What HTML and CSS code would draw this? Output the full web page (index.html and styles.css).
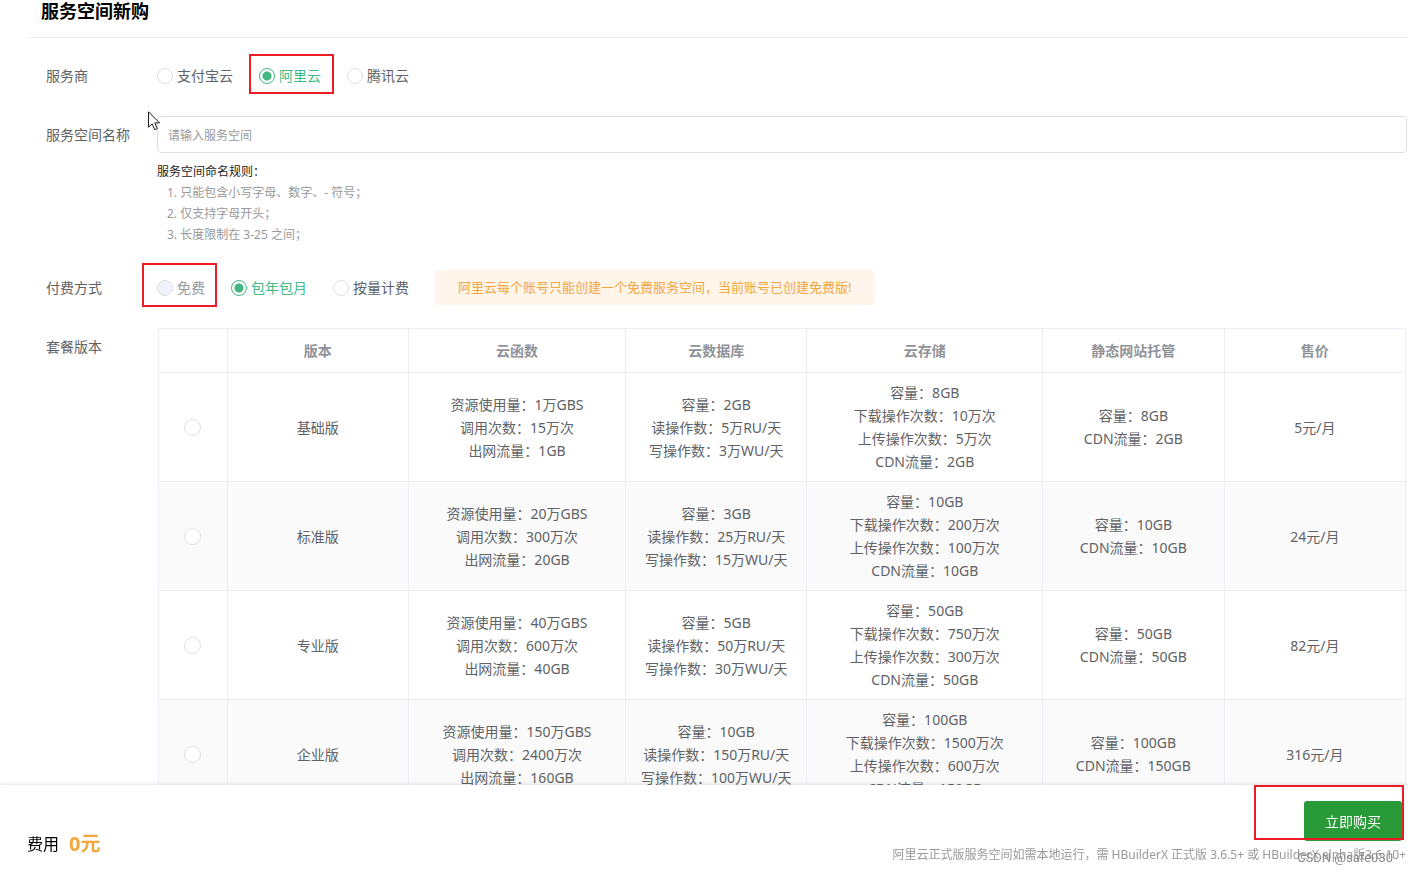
FILE: index.html
```
<!DOCTYPE html>
<html lang="zh-CN">

<head>
  <meta charset="UTF-8">
  <meta name="viewport" content="width=device-width, initial-scale=1.0">
  <title>服务空间新购</title>
  <link rel="stylesheet" href="styles.css">
</head>

<body>
  <header class="title">
    <h1>服务空间新购</h1>
  </header>
  <form class="form" id="buy">
    <div class="row">
      <span class="name" id="n_provider">服务商</span>
      <div class="radios" role="radiogroup" aria-labelledby="n_provider">
        <label class="radio"><input type="radio" name="provider">支付宝云</label>
        <label class="radio"><input type="radio" name="provider" checked>阿里云<i class="mark mark-provider"></i></label>
        <label class="radio"><input type="radio" name="provider">腾讯云</label>
      </div>
    </div>
    <div class="row">
      <label class="name" for="space">服务空间名称</label>
      <div class="field">
        <input class="text" id="space" type="text" placeholder="请输入服务空间">
        <svg class="cursor" width="13" height="20" viewBox="0 0 13 20">
          <path d="M.5 .8V16.2L4.2 12.9L6.8 18.7L9.3 17.6L6.8 11.9H11.6Z" fill="#fff" stroke="#1c1c28" />
        </svg>
        <div class="help">
          <p>服务空间命名规则：</p>
          <ol>
            <li>1. 只能包含小写字母、数字、- 符号；</li>
            <li>2. 仅支持字母开头；</li>
            <li>3. 长度限制在 3-25 之间；</li>
          </ol>
        </div>
      </div>
    </div>
    <div class="row">
      <span class="name" id="n_pay">付费方式</span>
      <div class="radios" role="radiogroup" aria-labelledby="n_pay">
        <label class="radio disabled"><input type="radio" name="pay" disabled>免费<i class="mark mark-free"></i></label>
        <label class="radio"><input type="radio" name="pay" checked>包年包月</label>
        <label class="radio"><input type="radio" name="pay">按量计费</label>
        <p class="alert">阿里云每个账号只能创建一个免费服务空间，当前账号已创建免费版!</p>
      </div>
    </div>
    <div class="row">
      <span class="name">套餐版本</span>
      <table class="plans">
        <colgroup>
          <col class="c-pick">
          <col class="c-mid">
          <col class="c-func">
          <col class="c-mid">
          <col class="c-store">
          <col class="c-mid">
          <col class="c-mid">
        </colgroup>
        <thead>
          <tr>
            <th></th>
            <th>版本</th>
            <th>云函数</th>
            <th>云数据库</th>
            <th>云存储</th>
            <th>静态网站托管</th>
            <th>售价</th>
          </tr>
        </thead>
        <tbody>
          <tr>
            <td><input type="radio" name="plan" aria-label="基础版"></td>
            <td>基础版</td>
            <td>资源使用量：1万GBS<br>调用次数：15万次<br>出网流量：1GB</td>
            <td>容量：2GB<br>读操作数：5万RU/天<br>写操作数：3万WU/天</td>
            <td>容量：8GB<br>下载操作次数：10万次<br>上传操作次数：5万次<br>CDN流量：2GB</td>
            <td>容量：8GB<br>CDN流量：2GB</td>
            <td>5元/月</td>
          </tr>
          <tr>
            <td><input type="radio" name="plan" aria-label="标准版"></td>
            <td>标准版</td>
            <td>资源使用量：20万GBS<br>调用次数：300万次<br>出网流量：20GB</td>
            <td>容量：3GB<br>读操作数：25万RU/天<br>写操作数：15万WU/天</td>
            <td>容量：10GB<br>下载操作次数：200万次<br>上传操作次数：100万次<br>CDN流量：10GB</td>
            <td>容量：10GB<br>CDN流量：10GB</td>
            <td>24元/月</td>
          </tr>
          <tr>
            <td><input type="radio" name="plan" aria-label="专业版"></td>
            <td>专业版</td>
            <td>资源使用量：40万GBS<br>调用次数：600万次<br>出网流量：40GB</td>
            <td>容量：5GB<br>读操作数：50万RU/天<br>写操作数：30万WU/天</td>
            <td>容量：50GB<br>下载操作次数：750万次<br>上传操作次数：300万次<br>CDN流量：50GB</td>
            <td>容量：50GB<br>CDN流量：50GB</td>
            <td>82元/月</td>
          </tr>
          <tr>
            <td><input type="radio" name="plan" aria-label="企业版"></td>
            <td>企业版</td>
            <td>资源使用量：150万GBS<br>调用次数：2400万次<br>出网流量：160GB</td>
            <td>容量：10GB<br>读操作数：150万RU/天<br>写操作数：100万WU/天</td>
            <td>容量：100GB<br>下载操作次数：1500万次<br>上传操作次数：600万次<br>CDN流量：150GB</td>
            <td>容量：100GB<br>CDN流量：150GB</td>
            <td>316元/月</td>
          </tr>
        </tbody>
      </table>
    </div>
  </form>
  <footer class="bar">
    <div class="fee">费用<strong>0元</strong></div>
    <div class="action">
      <button class="buy" type="submit" form="buy">立即购买</button>
      <p class="note">阿里云正式版服务空间如需本地运行，需 HBuilderX 正式版 3.6.5+ 或 HBuilderX alpha版3.6.10+</p>
    </div>
    <i class="mark mark-buy"></i>
    <span class="watermark">CSDN @safe030</span>
  </footer>
</body>

</html>
```
FILE: styles.css
```
* {
  padding: 0;
  margin: 0;
  box-sizing: border-box;
}

body {
  height: 100vh;
  overflow: hidden;
  background: #fff;
  color: #606266;
  font-family: "Noto Sans", "Noto Sans CJK SC", sans-serif;
  font-size: 14px;
  line-height: 23px;
}

.title {
  margin-left: 27px;
  padding: 0 14px 15px;
  border-bottom: 1px solid #ebeef0;
}

.title h1 {
  color: #000;
  font-size: 18px;
  line-height: 22px;
}

.form {
  display: flex;
  flex-direction: column;
  gap: 22px;
  padding: 19px 1px 0 46px;
}

.row {
  display: grid;
  grid-template-columns: 111px minmax(0, 1fr);
}

.name {
  line-height: 37px;
}

.radios {
  display: flex;
  align-items: center;
  gap: 26px;
}

.radio {
  position: relative;
  display: flex;
  align-items: center;
  gap: 4px;
  line-height: 21px;
}

.radio:has(:checked) {
  color: #42b983;
}

.disabled {
  color: #999;
}

input[type="radio"] {
  appearance: none;
  width: 16px;
  height: 16px;
  border: 1px solid #dcdfe6;
  border-radius: 50%;
  background: #fff;
}

input[type="radio"]:checked {
  border-color: #42b983;
  background: radial-gradient(circle, #42b983 4px, #fff 5px);
}

input[type="radio"]:disabled {
  background: #f0f3fa;
}

.field {
  position: relative;
}

.text {
  display: block;
  width: 100%;
  height: 37px;
  padding: 2px 10px 0;
  border: 1px solid #e0e0e0;
  border-radius: 4px;
  outline: none;
  font-family: inherit;
  font-size: 12px;
}

.text::placeholder {
  color: #999;
}

.cursor {
  position: absolute;
  left: -9px;
  top: -5px;
}

.help {
  padding: 8px 0 2px;
  color: #999;
  font-size: 12px;
  line-height: 21px;
}

.help p {
  color: #222;
}

.help ol {
  padding-left: 10px;
  list-style: none;
}

.alert {
  padding: 0 23px;
  border-radius: 4px;
  background: #fff5eb;
  color: #f3a73f;
  font-size: 13px;
  line-height: 35px;
}

.plans {
  width: calc(100% - 2px);
  margin: 0 1px;
  table-layout: fixed;
  border-collapse: collapse;
  text-align: center;
}

.c-pick {
  width: 67px;
}

.c-func {
  width: 17.4%;
}

.c-store {
  width: 18.9%;
}

.c-mid {
  width: 14.55%;
}

.plans th,
.plans td {
  padding: 8px 0;
  border: 1px solid #ebeef5;
}

.plans th {
  padding: 10px 0;
  color: #909399;
}

.plans td input {
  display: block;
  width: 17px;
  height: 17px;
  margin: 0 auto;
}

.plans tbody tr:nth-child(even) {
  background: #fafafa;
}

.bar {
  position: fixed;
  left: 0;
  right: 0;
  bottom: 0;
  height: 88px;
  display: flex;
  justify-content: space-between;
  padding: 16px 2px 0 27px;
  background: #fff;
  box-shadow: 0 0 5px rgba(0, 0, 0, .15);
}

.fee {
  display: flex;
  align-items: center;
  gap: 10px;
  padding-bottom: 14px;
  align-self: flex-end;
  color: #000;
  font-size: 16px;
  line-height: 30px;
}

.fee strong {
  color: #f3a73f;
  font-size: 20px;
}

.action {
  display: flex;
  flex-direction: column;
  align-items: flex-end;
  gap: 4px;
}

.buy {
  width: 98px;
  height: 40px;
  margin-right: 4px;
  border: none;
  border-radius: 3px;
  background: #289b38;
  color: #fff;
  font-family: inherit;
  font-size: 14px;
}

.note {
  color: #999;
  font-size: 12px;
  line-height: 20px;
}

.watermark {
  position: absolute;
  right: 15px;
  bottom: 5px;
  color: #8a8a8a;
  font-family: Roboto, "Liberation Sans", sans-serif;
  font-size: 13px;
  line-height: 20px;
}

/* red highlight frames */
.mark {
  position: absolute;
  border: 2px solid #ed1c24;
  pointer-events: none;
}

.mark-provider {
  inset: -11px -13px -8px -10px;
}

.mark-free {
  inset: -14px -12px -9px -15px;
}

.mark-buy {
  top: 0;
  right: 4px;
  width: 150px;
  height: 55px;
}
```
